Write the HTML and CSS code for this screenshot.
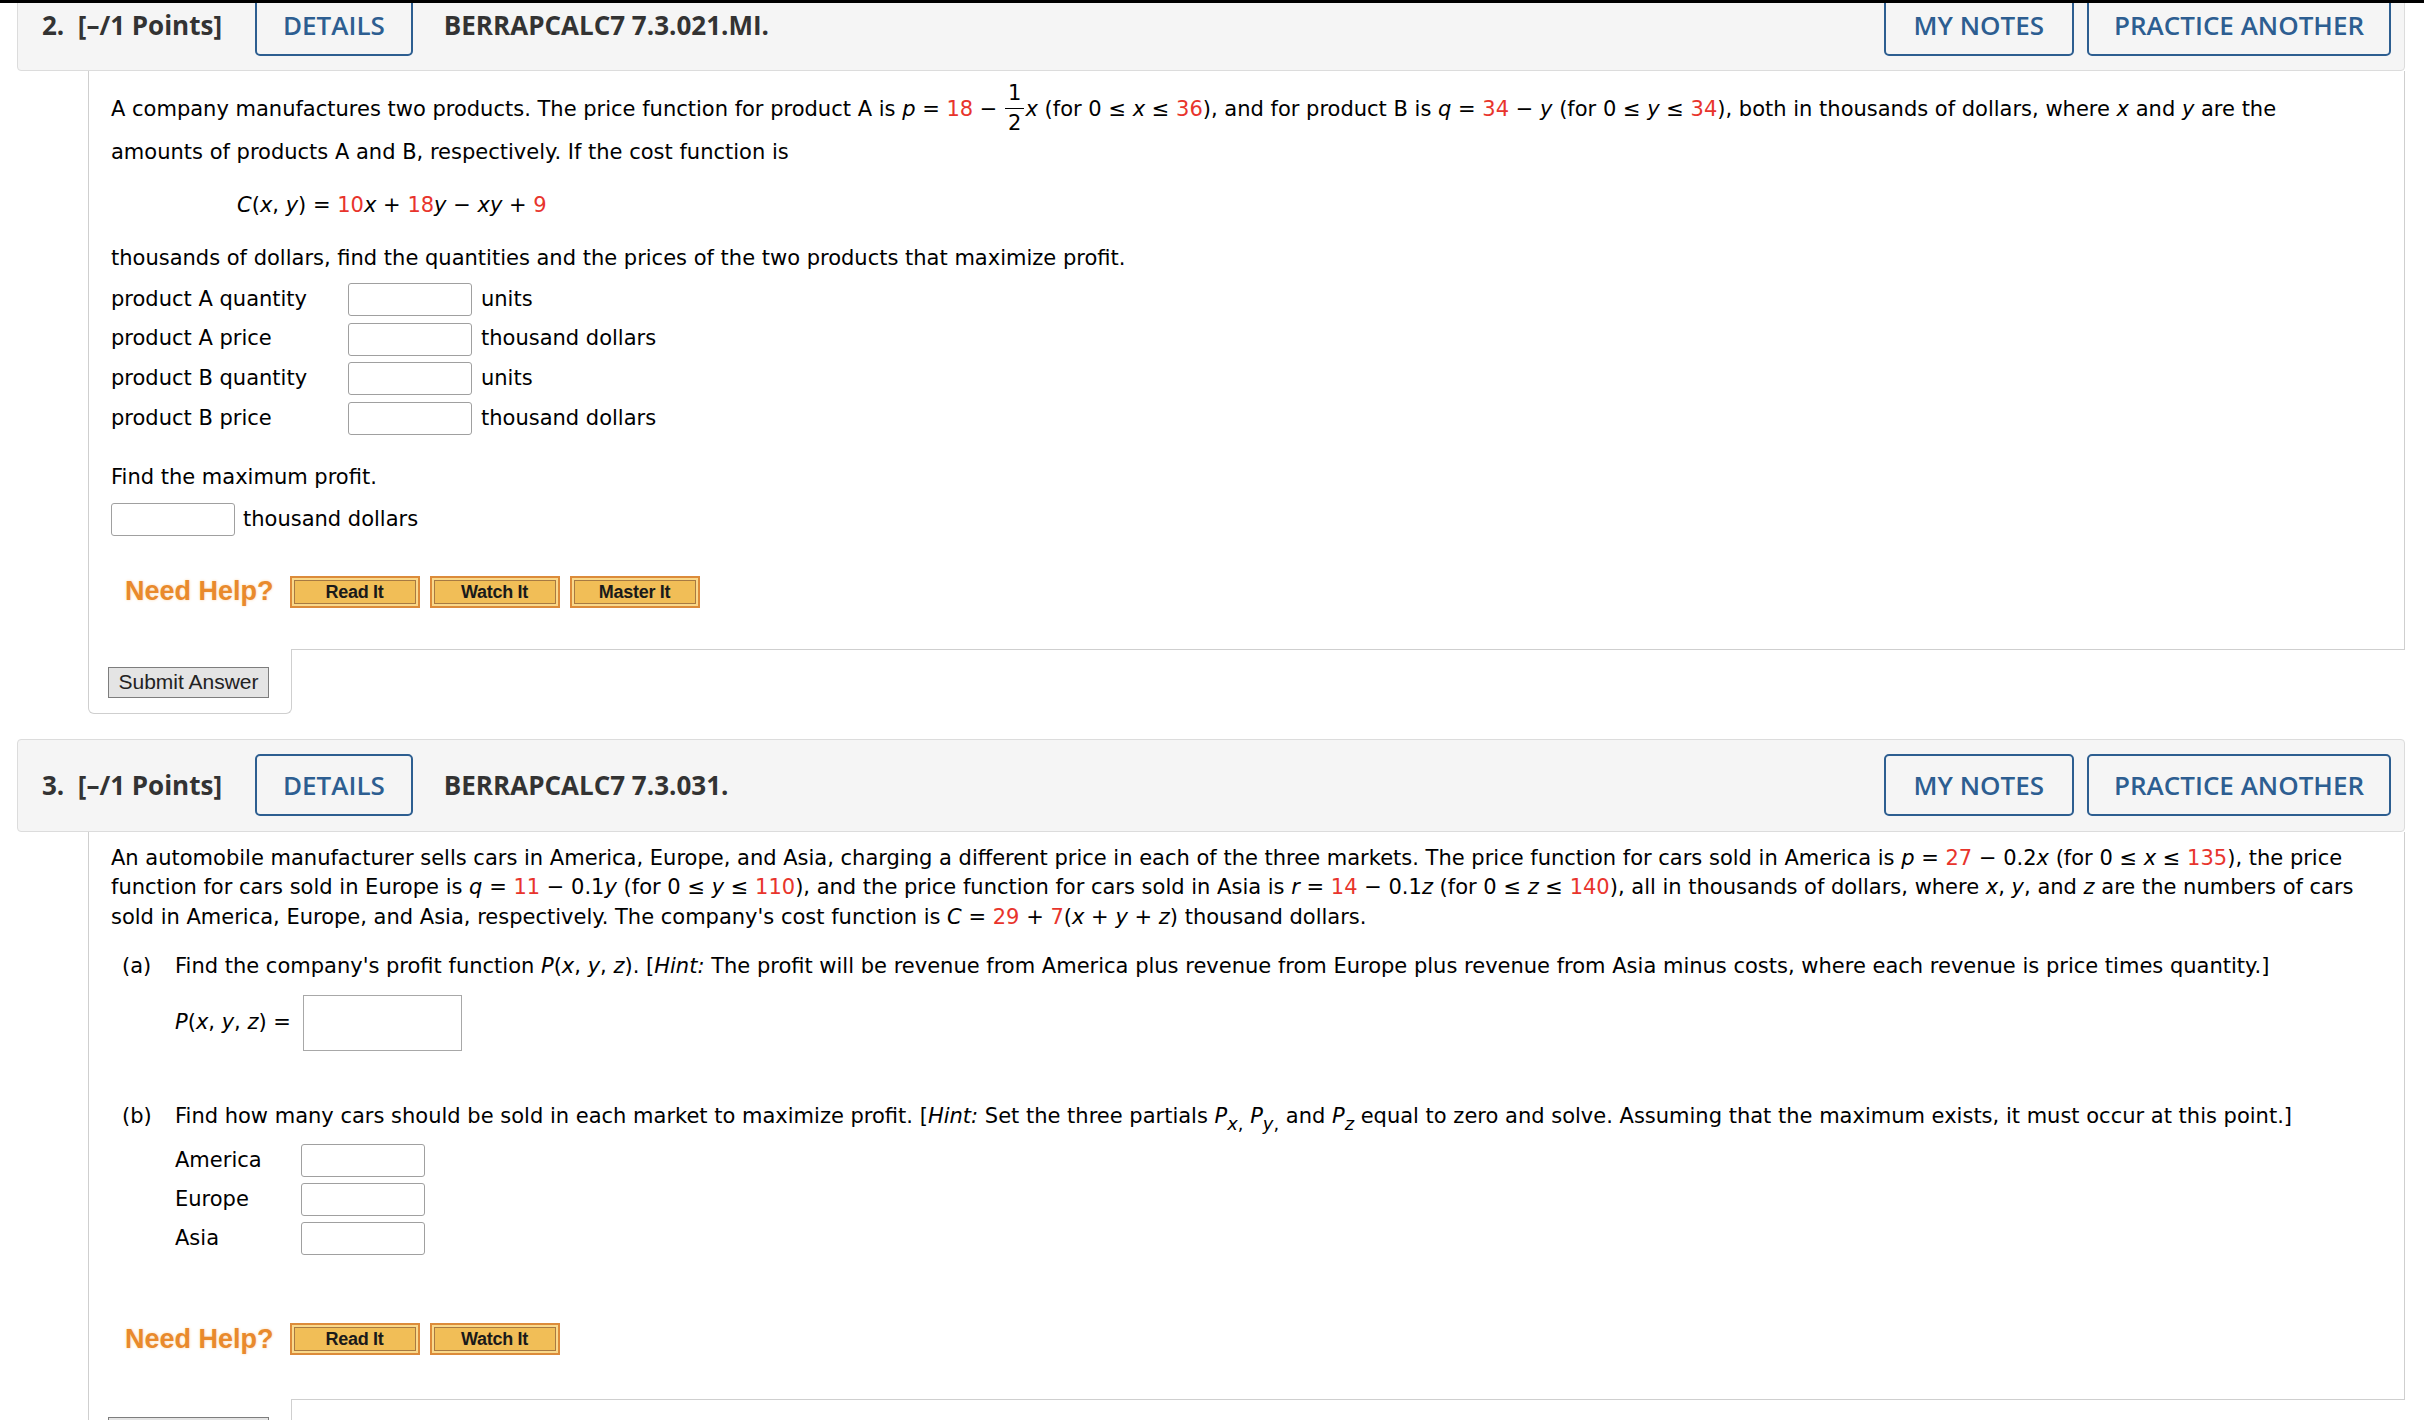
FILE: index.html
```html
<!DOCTYPE html>
<html lang="en">
<head>
<meta charset="utf-8">
<title>Questions</title>
<link rel="stylesheet" href="styles.css">
</head>
<body>
<div class="topbar"></div>
<main class="page">

  <section class="question">
    <header class="qhead">
      <span class="qnum">2.&nbsp; [–/1 Points]</span>
      <a class="obtn">DETAILS</a>
      <span class="qid">BERRAPCALC7 7.3.021.MI.</span>
      <span class="spacer"></span>
      <a class="obtn notes">MY NOTES</a>
      <a class="obtn practice">PRACTICE ANOTHER</a>
    </header>
    <div class="qbody">
      <div class="qcontent q2">
        <p class="para">A company manufactures two products. The price function for product A is <i>p</i> = <span class="r">18</span> − <span class="frac"><span class="num">1</span><span class="den">2</span></span><i>x</i> (for 0 ≤ <i>x</i> ≤ <span class="r">36</span>), and for product B is <i>q</i> = <span class="r">34</span> − <i>y</i> (for 0 ≤ <i>y</i> ≤ <span class="r">34</span>), both in thousands of dollars, where <i>x</i> and <i>y</i> are the<br>amounts of products A and B, respectively. If the cost function is</p>
        <p class="formula"><i>C</i>(<i>x</i>, <i>y</i>) = <span class="r">10</span><i>x</i> + <span class="r">18</span><i>y</i> − <i>xy</i> + <span class="r">9</span></p>
        <p class="para">thousands of dollars, find the quantities and the prices of the two products that maximize profit.</p>
        <div class="rows">
          <div class="row"><span class="lbl">product A quantity</span><span class="ans"></span><span class="unit">units</span></div>
          <div class="row"><span class="lbl">product A price</span><span class="ans"></span><span class="unit">thousand dollars</span></div>
          <div class="row"><span class="lbl">product B quantity</span><span class="ans"></span><span class="unit">units</span></div>
          <div class="row"><span class="lbl">product B price</span><span class="ans"></span><span class="unit">thousand dollars</span></div>
        </div>
        <p class="para find">Find the maximum profit.</p>
        <div class="row maxrow"><span class="ans"></span><span class="unit tight">thousand dollars</span></div>
        <div class="help">
          <span class="help-label">Need Help?</span>
          <span class="help-btn"><span>Read It</span></span>
          <span class="help-btn"><span>Watch It</span></span>
          <span class="help-btn"><span>Master It</span></span>
        </div>
      </div>
      <div class="qfoot">
        <div class="submit-tab"><button class="submit">Submit Answer</button></div>
        <div class="foot-rest"></div>
      </div>
    </div>
  </section>

  <section class="question">
    <header class="qhead">
      <span class="qnum">3.&nbsp; [–/1 Points]</span>
      <a class="obtn">DETAILS</a>
      <span class="qid">BERRAPCALC7 7.3.031.</span>
      <span class="spacer"></span>
      <a class="obtn notes">MY NOTES</a>
      <a class="obtn practice">PRACTICE ANOTHER</a>
    </header>
    <div class="qbody">
      <div class="qcontent q3">
        <p class="para">An automobile manufacturer sells cars in America, Europe, and Asia, charging a different price in each of the three markets. The price function for cars sold in America is <i>p</i> = <span class="r">27</span> − 0.2<i>x</i> (for 0 ≤ <i>x</i> ≤ <span class="r">135</span>), the price<br>function for cars sold in Europe is <i>q</i> = <span class="r">11</span> − 0.1<i>y</i> (for 0 ≤ <i>y</i> ≤ <span class="r">110</span>), and the price function for cars sold in Asia is <i>r</i> = <span class="r">14</span> − 0.1<i>z</i> (for 0 ≤ <i>z</i> ≤ <span class="r">140</span>), all in thousands of dollars, where <i>x</i>, <i>y</i>, and <i>z</i> are the numbers of cars<br>sold in America, Europe, and Asia, respectively. The company's cost function is <i>C</i> = <span class="r">29</span> + <span class="r">7</span>(<i>x</i> + <i>y</i> + <i>z</i>) thousand dollars.</p>

        <div class="part part-a">
          <span class="plabel">(a)</span>
          <span class="ptext">Find the company's profit function <i>P</i>(<i>x</i>, <i>y</i>, <i>z</i>). [<i>Hint:</i> The profit will be revenue from America plus revenue from Europe plus revenue from Asia minus costs, where each revenue is price times quantity.]</span>
        </div>
        <div class="prow"><span><i>P</i>(<i>x</i>, <i>y</i>, <i>z</i>) =</span><span class="bigans"></span></div>

        <div class="part part-b">
          <span class="plabel">(b)</span>
          <span class="ptext">Find how many cars should be sold in each market to maximize profit. [<i>Hint:</i> Set the three partials <i>P</i><sub><i>x</i>,</sub> <i>P</i><sub><i>y</i>,</sub> and <i>P</i><sub><i>z</i></sub> equal to zero and solve. Assuming that the maximum exists, it must occur at this point.]</span>
        </div>
        <div class="rows brows">
          <div class="row"><span class="lbl short">America</span><span class="ans"></span></div>
          <div class="row"><span class="lbl short">Europe</span><span class="ans"></span></div>
          <div class="row"><span class="lbl short">Asia</span><span class="ans"></span></div>
        </div>
        <div class="help help3">
          <span class="help-label">Need Help?</span>
          <span class="help-btn"><span>Read It</span></span>
          <span class="help-btn"><span>Watch It</span></span>
        </div>
      </div>
      <div class="qfoot">
        <div class="submit-tab"><button class="submit">Submit Answer</button></div>
        <div class="foot-rest"></div>
      </div>
    </div>
  </section>

</main>
</body>
</html>
```

FILE: styles.css
```css
* { box-sizing: border-box; }
html, body { margin: 0; padding: 0; background: #fff; }
body {
  font-family: "DejaVu Sans", Verdana, sans-serif;
  font-size: 21px;
  line-height: 29.5px;
  color: #000;
  overflow: hidden;
}
p { margin: 0; }
i { font-style: italic; }
.r { color: #e8342c; }

.topbar {
  position: fixed; top: 0; left: 0; right: 0;
  height: 3px; background: #000; z-index: 10;
}

.page {
  width: 2405px;
  padding-left: 17px;
  margin-top: -22px;
}
.question + .question { margin-top: 25px; }

.qhead {
  display: flex;
  align-items: center;
  height: 93px;
  background: #f5f5f5;
  border: 1px solid #dcdcdc;
  border-radius: 4px;
  padding: 0 13px 0 24px;
  font-family: "Open Sans", sans-serif;
  font-weight: 700;
  font-size: 26px;
  color: #333;
  line-height: 1;
}
.qnum { margin-right: 33px; white-space: pre; }
.qid { margin-left: 31px; }
.spacer { flex: 1; }
.obtn {
  display: flex;
  align-items: center;
  justify-content: center;
  height: 62px;
  padding: 0 26px;
  border: 2px solid #2d5e90;
  border-radius: 5px;
  color: #2d5e91;
  font-weight: 600;
}
.obtn.notes { margin-right: 13px; padding: 0 28px; }
.obtn.practice { padding: 0 25px; }

.qbody { margin-left: 71px; }
.qcontent {
  border-left: 1px solid #cfcfcf;
  border-right: 1px solid #cfcfcf;
  padding: 0 12px 0 22px;
}
.q2 { padding-top: 10px; padding-bottom: 32px; }
.q3 { padding-top: 12px; padding-bottom: 35px; }

.frac {
  display: inline-flex;
  flex-direction: column;
  align-items: center;
  vertical-align: middle;
  line-height: 25px;
  margin: 0 1px 2px;
}
.frac .num { border-bottom: 1px solid #000; padding: 0 3px 2px; }
.frac .den { padding-top: 2px; }

.formula { margin: 23px 0 24px 126px; }

.rows { margin-top: 6px; }
.row { display: flex; align-items: center; height: 39.7px; }
.lbl { width: 237px; }
.lbl.short { width: 126px; }
.ans {
  width: 124px; height: 33px;
  border: 1px solid #a0a0a0;
  border-radius: 3px;
  background: #fff;
}
.unit { margin-left: 9px; }
.unit.tight { margin-left: 8px; }
.find { margin-top: 25px; }
.maxrow { margin-top: 7px; height: 40px; }

.help {
  display: flex;
  align-items: center;
  height: 50px;
  margin: 27px 0 0 14px;
}
.help3 { margin-top: 56px; }
.help-label {
  font-family: "Liberation Sans", Arial, sans-serif;
  font-weight: 700;
  font-size: 27px;
  color: #e98a2c;
  text-shadow: 0 0 3px #fad7ad;
  margin-right: 16px;
}
.help-btn {
  display: block;
  width: 130px; height: 32px;
  margin-right: 10px;
  border: 2px solid #dc8b3a;
  background: #f9d98c;
  padding: 2px;
}
.help-btn span {
  display: flex;
  height: 100%;
  align-items: center;
  justify-content: center;
  border: 1px solid #a77a42;
  background: #f1be57;
  font-family: "Liberation Sans", Arial, sans-serif;
  font-weight: 700;
  font-size: 18px;
  letter-spacing: -0.3px;
  color: #1a1a1a;
  line-height: 1;
}

.qfoot { display: flex; }
.submit-tab {
  width: 204px; height: 65px;
  border: 1px solid #cfcfcf;
  border-top: none;
  border-radius: 0 0 6px 6px;
  padding: 18px 0 0 19px;
}
.foot-rest { flex: 1; border-top: 1px solid #cfcfcf; }
.submit {
  display: block;
  width: 161px; height: 31px;
  padding: 0;
  background: #e4e4e4;
  border: 1px solid #7d7d7d;
  font-family: "Liberation Sans", Arial, sans-serif;
  font-size: 21px;
  color: #222;
}

.part { display: flex; }
.part-a { margin-top: 20px; }
.part-b { margin-top: 51px; }
.plabel { width: 53px; margin-left: 11px; flex: none; }
.prow {
  display: flex;
  align-items: center;
  margin: 13px 0 0 64px;
  height: 56px;
}
.bigans {
  width: 159px; height: 56px;
  margin-left: 12px;
  border: 1px solid #a8a8a8;
  background: #fff;
}
sub {
  font-size: 0.85em;
  line-height: 0;
  vertical-align: -0.4em;
}
.brows { margin: 10px 0 0 64px; }
.brows .row { height: 39px; }
```
